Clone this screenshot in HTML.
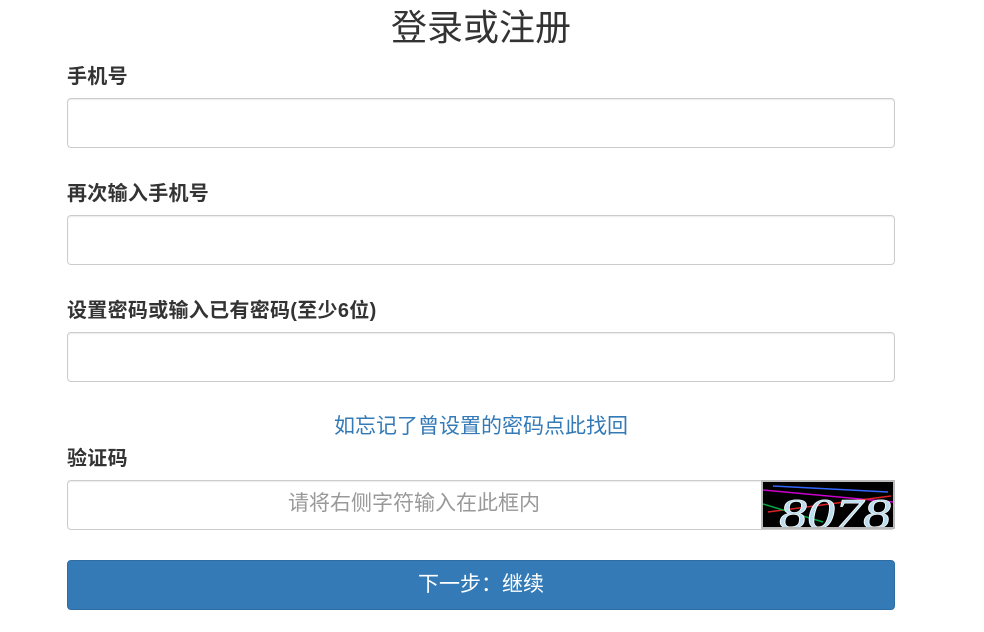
<!DOCTYPE html>
<html><head><meta charset="utf-8"><style>
body{margin:0;width:984px;height:632px;background:#fff;font-family:"Liberation Sans","Noto Sans CJK SC",sans-serif;color:#333;position:relative;overflow:hidden}
.a{position:absolute}
.t{left:0;width:962px;text-align:center;top:6px;font-size:36px;line-height:44px}
.l{left:67px;font-size:20px;font-weight:bold;line-height:26px;letter-spacing:.3px}
.i{left:67px;width:826px;height:48px;border:1px solid #ccc;border-radius:4px;box-shadow:inset 0 1px 1px rgba(0,0,0,.075)}
</style></head><body>
<div class="a t">登录或注册</div>
<div class="a l" style="top:64px">手机号</div>
<div class="a i" style="top:98px"></div>
<div class="a l" style="top:181px">再次输入手机号</div>
<div class="a i" style="top:215px"></div>
<div class="a l" style="top:298px">设置密码或输入已有密码(至少6位)</div>
<div class="a i" style="top:332px"></div>
<div class="a" style="left:0;width:962px;text-align:center;top:413px;font-size:21px;line-height:28px;color:#337ab7">如忘记了曾设置的密码点此找回</div>
<div class="a l" style="top:446px">验证码</div>
<div class="a i" style="top:480px;width:826px"></div>
<div class="a" style="left:67px;width:694px;top:490px;text-align:center;font-size:21px;line-height:28px;color:#999">请将右侧字符输入在此框内</div>
<div class="a" style="left:761px;top:480px;width:134px;height:49px;background:#000;border:2px solid #bbb;box-sizing:border-box;overflow:hidden">
<svg width="132" height="48"><g stroke-width="1.5"><line x1="0" y1="8" x2="130" y2="20" stroke="#c0c"/><line x1="10" y1="4" x2="125" y2="10" stroke="#36f"/><line x1="5" y1="30" x2="128" y2="14" stroke="#d22"/><line x1="0" y1="22" x2="60" y2="40" stroke="#0a4"/></g>
<text x="16" y="46" font-family="Liberation Serif" font-style="italic" font-size="42" fill="#bde" stroke="#fff" stroke-width=".6" textLength="112" lengthAdjust="spacingAndGlyphs">8078</text></svg></div>
<div class="a" style="left:67px;top:560px;width:826px;height:48px;background:#337ab7;border:1px solid #2e6da4;border-radius:4px;color:#fff;text-align:center;font-size:21px;line-height:48px">下一步：继续</div>
</body></html>
